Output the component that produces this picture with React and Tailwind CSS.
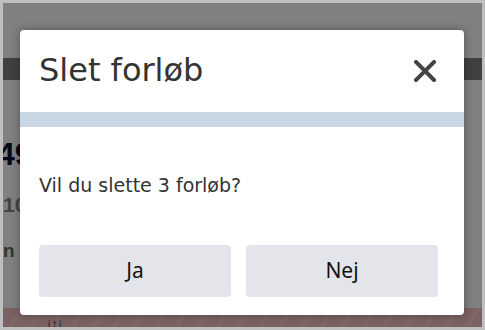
import React from "react";

const Background = () => {
  return (
    <div className="absolute inset-0 overflow-hidden" style={{ fontFamily: '"Liberation Sans", Arial, sans-serif' }}>
      <div className="mt-[55px] h-[22px] bg-[#404040]" />
      <div className="mt-[58px] -ml-[6px] text-[32px] leading-[32px] font-bold text-[#080818]">
        49
      </div>
      <div className="mt-[24px] ml-0 text-[21px] leading-[21px] font-bold text-[#444]">
        10
      </div>
      <div className="mt-[26px] ml-0 text-[19px] leading-[19px] font-bold text-[#333]">
        n
      </div>
      <div className="absolute left-0 right-0 bottom-0 h-[19px] bg-[repeating-linear-gradient(120deg,#7b6262_0px,#7b6262_14px,#806666_14px,#806666_18px)]">
        <div className="pl-[45px] pt-[12px] text-[10px] leading-[10px] text-[#222] tracking-[3px]">
          iti
        </div>
      </div>
    </div>
  );
};

const CloseIcon = () => (
  <svg width="22" height="22" viewBox="0 0 22 22" className="text-[#444]">
    <path
      d="M2 2L20 20M20 2L2 20"
      stroke="currentColor"
      strokeWidth="4"
      strokeLinecap="square"
    />
  </svg>
);

export default function App() {
  return (
    <div className="w-[485px] h-[330px] bg-[#bfbfbf] p-[3px]">
      <div className="relative w-full h-full bg-[#808080] overflow-hidden">
        <Background />
        <div
          className="absolute left-[17px] top-[27px] w-[444px] h-[285px] bg-white rounded-[4px] shadow-[0_0_10px_rgba(0,0,0,0.35)] flex flex-col overflow-hidden"
          style={{ fontFamily: '"DejaVu Sans", Verdana, sans-serif' }}
        >
          <div className="h-[82px] flex items-center justify-between pl-[19px] pr-[28px]">
            <h2 className="text-[32px] leading-none text-[#333] pb-[2px]">Slet forløb</h2>
            <button className="flex items-center justify-center">
              <CloseIcon />
            </button>
          </div>
          <div className="h-[15px] bg-[#c9d6e3]" />
          <div className="pl-[19px] pt-[47px] text-[19px] leading-[22px] text-[#333]">
            Vil du slette 3 forløb?
          </div>
          <div
            className="mt-auto mb-[18px] pl-[19px] flex gap-[15px]"
            style={{ fontFamily: '"Noto Sans", "Open Sans", sans-serif' }}
          >
            <button className="w-[192px] h-[52px] rounded-[4px] bg-[#e4e5ea] text-[21px] text-[#111]">
              Ja
            </button>
            <button className="w-[192px] h-[52px] rounded-[4px] bg-[#e4e5ea] text-[21px] text-[#111]">
              Nej
            </button>
          </div>
        </div>
      </div>
    </div>
  );
}
